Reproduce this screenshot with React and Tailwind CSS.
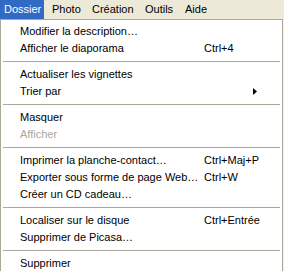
import React from "react";

const menus = [
  { label: "Dossier", w: "w-[44px]", pl: "pl-[4px]", active: true },
  { label: "Photo", w: "w-[42px]", pl: "pl-[8px]" },
  { label: "Création", w: "w-[53px]", pl: "pl-[6px]" },
  { label: "Outils", w: "w-[40px]", pl: "pl-[6px]" },
  { label: "Aide", w: "w-[40px]", pl: "pl-[6px]" },
];

const rows = [
  { label: "Modifier la description…" },
  { label: "Afficher le diaporama", key: "Ctrl+4" },
  { sep: true },
  { label: "Actualiser les vignettes" },
  { label: "Trier par", sub: true },
  { sep: true },
  { label: "Masquer" },
  { label: "Afficher", disabled: true },
  { sep: true },
  { label: "Imprimer la planche-contact…", key: "Ctrl+Maj+P" },
  { label: "Exporter sous forme de page Web…", key: "Ctrl+W" },
  { label: "Créer un CD cadeau…" },
  { sep: true },
  { label: "Localiser sur le disque", key: "Ctrl+Entrée" },
  { label: "Supprimer de Picasa…" },
  { sep: true },
  { label: "Supprimer" },
];

export default function App() {
  return (
    <div
      className="w-[284px] h-[271px] overflow-hidden bg-[#f4f3ee] text-[11px] text-black"
      style={{ fontFamily: '"Liberation Sans", Arial, sans-serif' }}
    >
      {/* menu bar */}
      <div className="flex h-[19px] bg-[#ece9d8]">
        {menus.map((m) => (
          <div
            key={m.label}
            className={`flex items-center ${m.w} ${m.pl} ${
              m.active ? "bg-[#316ac5] text-white" : ""
            }`}
          >
            {m.label}
          </div>
        ))}
      </div>

      {/* dropdown */}
      <div className="w-[283px] border border-[#aca899] border-b-0 bg-white pt-[3px]">
        {rows.map((r, i) =>
          r.sep ? (
            <div key={i} className="flex h-[9px] items-center px-[2px]">
              <div className="h-px w-full bg-[#aca899]" />
            </div>
          ) : (
            <div
              key={i}
              className={`flex h-[17px] items-center pl-[19px] ${
                r.disabled ? "text-[#aca899]" : ""
              }`}
            >
              <span className="w-[184px] whitespace-nowrap">{r.label}</span>
              {r.key && <span className="whitespace-nowrap">{r.key}</span>}
              {r.sub && (
                <svg width="4" height="7" viewBox="0 0 4 7" className="ml-[49px]">
                  <path d="M0 0 L4 3.5 L0 7 Z" fill="#000" />
                </svg>
              )}
            </div>
          )
        )}
      </div>
    </div>
  );
}
